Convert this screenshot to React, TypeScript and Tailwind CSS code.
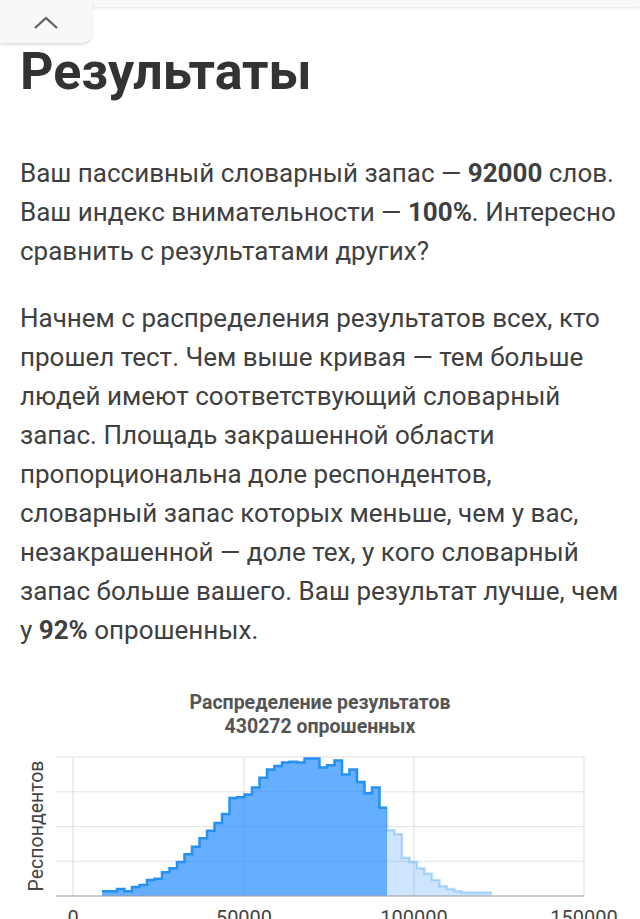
import React from "react";

const DARK = [
  0.035, 0.035, 0.05, 0.035, 0.065, 0.08, 0.115, 0.125, 0.17, 0.2, 0.245, 0.3, 0.355, 0.415, 0.47, 0.525, 0.59, 0.705,
  0.71, 0.73, 0.78, 0.85, 0.91, 0.935, 0.96, 0.965, 0.96, 0.99, 0.99, 0.925, 0.94, 0.975, 0.875, 0.91, 0.82, 0.74, 0.78,
  0.635,
];
const LIGHT = [0.475, 0.445, 0.275, 0.245, 0.2, 0.16, 0.115, 0.07, 0.05, 0.035, 0.025, 0.025, 0.025, 0.025];

const X0 = 102;
const BW = 7.5;
const BASE = 157;
const TOP = 18;
const H = BASE - TOP;

function steps(vals: number[], start: number) {
  const pts: [number, number][] = [];
  vals.forEach((v, i) => {
    const y = BASE - v * H;
    pts.push([start + i * BW, y]);
    pts.push([start + (i + 1) * BW, y]);
  });
  return pts;
}

function Chart() {
  const dark = steps(DARK, X0);
  const lightStart = X0 + DARK.length * BW;
  const light = steps(LIGHT, lightStart);
  const toLine = (p: [number, number][]) => p.map((q, i) => `${i === 0 ? "M" : "L"}${q[0]},${q[1]}`).join(" ");
  const toArea = (p: [number, number][]) =>
    `M${p[0][0]},${BASE} ` + p.map((q) => `L${q[0]},${q[1]}`).join(" ") + ` L${p[p.length - 1][0]},${BASE} Z`;
  const lightLine: [number, number][] = [[lightStart, dark[dark.length - 1][1]], ...light];
  const grid = [TOP, TOP + H / 4, TOP + H / 2, TOP + (3 * H) / 4];
  const vx = [73, 244, 414, 584];
  return (
    <svg width="640" height="192" viewBox="0 0 640 192" className="block" style={{ fontFamily: "Roboto, sans-serif" }}>
      {grid.map((y) => (
        <line key={y} x1="56" x2="584" y1={y} y2={y} stroke="#e3e3e3" strokeWidth="1" />
      ))}
      {vx.map((x) => (
        <line key={x} x1={x} x2={x} y1={TOP} y2={BASE} stroke="#dcdcdc" strokeWidth="1" />
      ))}
      <path d={toArea(light)} fill="#1e88ff" fillOpacity="0.22" />
      <path d={toArea(dark)} fill="#1e88ff" fillOpacity="0.68" />
      <path d={toLine(lightLine)} fill="none" stroke="#2591f0" strokeOpacity="0.3" strokeWidth="2.5" />
      <path d={toLine(dark)} fill="none" stroke="#2591f0" strokeWidth="2.5" />
      <line x1="56" x2="584" y1={BASE} y2={BASE} stroke="#9a9a9a" strokeWidth="1.2" />
      <text x="0" y="0" transform="translate(43,87) rotate(-90)" textAnchor="middle" fontSize="19.5" fill="#444">
        Респондентов
      </text>
      {[
        ["0", 73],
        ["50000", 244],
        ["100000", 414],
        ["150000", 584],
      ].map(([t, x]) => (
        <text key={t as string} x={x as number} y="186" textAnchor="middle" fontSize="20" fill="#444">
          {t}
        </text>
      ))}
    </svg>
  );
}

export default function App() {
  return (
    <div className="w-[640px] bg-white text-[#404040]" style={{ fontFamily: "Roboto, 'Noto Sans', sans-serif" }}>
      <div className="flex items-start h-[43px]">
        <div className="w-[92px] h-[43px] bg-[#f8f8f8] rounded-br-[10px] shadow-[0_2px_3px_rgba(0,0,0,0.12)] flex items-center justify-center relative z-10">
          <svg width="26" height="14" viewBox="0 0 26 14" className="mt-[2px]">
            <path d="M2 12 L13 2 L24 12" fill="none" stroke="#5f5f5f" strokeWidth="2.2" />
          </svg>
        </div>
        <div className="flex-1 h-[7px] bg-[#f8f8f8] shadow-[0_2px_3px_rgba(0,0,0,0.08)]" />
      </div>
      <div className="px-5">
        <h1 className="text-[52px] leading-[56px] font-bold text-[#333] mt-[1px]">Результаты</h1>
        <p className="mt-[54px] text-[26px] leading-[39px]">
          Ваш пассивный словарный запас — <b>92000</b> слов.
          <br />
          Ваш индекс внимательности — <b>100%</b>. Интересно
          <br />
          сравнить с результатами других?
        </p>
        <p className="mt-[28px] text-[26px] leading-[39px]">
          Начнем с распределения результатов всех, кто
          <br />
          прошел тест. Чем выше кривая — тем больше
          <br />
          людей имеют соответствующий словарный
          <br />
          запас. Площадь закрашенной области
          <br />
          пропорциональна доле респондентов,
          <br />
          словарный запас которых меньше, чем у вас,
          <br />
          незакрашенной — доле тех, у кого словарный
          <br />
          запас больше вашего. Ваш результат лучше, чем
          <br />у <b>92%</b> опрошенных.
        </p>
      </div>
      <div className="mt-[41px]">
        <div className="text-center text-[19.5px] leading-[24px] font-bold text-[#555]">
          Распределение результатов
          <br />
          430272 опрошенных
        </div>
        <Chart />
      </div>
    </div>
  );
}
